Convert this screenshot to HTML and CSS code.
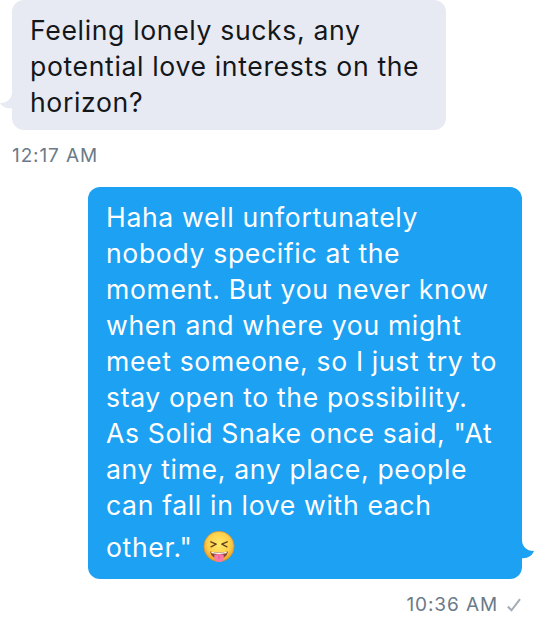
FILE: index.html
```
<!DOCTYPE html>
<html lang="en">
<head>
    <meta charset="UTF-8">
    <meta name="viewport" content="width=device-width, initial-scale=1.0">
    <title>Messages</title>
    <link rel="stylesheet" href="styles.css">
</head>
<body>

    <div class="chat">
        <div class="message received">
            <div class="bubble">
                Feeling lonely sucks, any<br>
                potential love interests on the<br>
                horizon?
                <svg class="tail" width="13" height="20" viewBox="0 0 13 20">
                    <path d="M12 0C12 6 8 11 0 11C2 15 7 17 13 16V0Z"/>
                </svg>
            </div>
            <div class="time">12:17 AM</div>
        </div>

        <div class="message sent">
            <div class="bubble">
                Haha well unfortunately<br>
                nobody specific at the<br>
                moment. But you never know<br>
                when and where you might<br>
                meet someone, so I just try to<br>
                stay open to the possibility.<br>
                As Solid Snake once said, "At<br>
                any time, any place, people<br>
                can fall in love with each<br>
                <span class="last-line">other."
                    <svg class="emoji" width="32" height="32" viewBox="0 0 32 32">
                        <defs>
                            <radialGradient id="face" cx="50%" cy="42%" r="58%">
                                <stop offset="0" stop-color="#ffe96b"/>
                                <stop offset="0.65" stop-color="#fdd04b"/>
                                <stop offset="1" stop-color="#e99a26"/>
                            </radialGradient>
                        </defs>
                        <circle cx="16" cy="15.5" r="15.2" fill="url(#face)" stroke="#b88a45" stroke-width="0.6"/>
                        <path d="M7.8 10.8L13.2 13.2L8 15.8M24.2 10.8L18.8 13.2L24 15.8" fill="none" stroke="#62401d" stroke-width="1.3" stroke-linecap="round" stroke-linejoin="round"/>
                        <path d="M7 20.5Q16 22.5 25 20.5Q23.5 27.5 16 27.5Q8.5 27.5 7 20.5Z" fill="#84492a"/>
                        <path d="M8 20.8Q16 22.6 24 20.8L23.3 22.3Q16 23.8 8.7 22.3Z" fill="#fff"/>
                        <path d="M11.3 23.8Q16 22.3 20.7 23.8V26.5Q20.7 31 16 31Q11.3 31 11.3 26.5Z" fill="#fb79a6"/>
                        <path d="M16 24V28" stroke="#dc5785" stroke-width="0.8"/>
                    </svg>
                </span>
                <svg class="tail" width="13" height="20" viewBox="0 0 13 20">
                    <path d="M1 0C1 6 5 11 13 11C11 16 6 19 0 18V0Z"/>
                </svg>
            </div>
            <div class="time">
                10:36 AM
                <svg class="check" width="14" height="14" viewBox="0 0 14 14">
                    <path d="M0.8 8.5L4.5 12.3L13 1.2"/>
                </svg>
            </div>
        </div>
    </div>

</body>
</html>
```

FILE: styles.css
```
body {
    margin: 0;
    background: #fff;
    font-family: Inter, "Liberation Sans", sans-serif;
}

.chat {
    display: flex;
    flex-direction: column;
    gap: 19px;
    padding: 0 18px 0 12px;
}

.message {
    display: flex;
    flex-direction: column;
}

.received {
    align-items: flex-start;
}

.sent {
    align-items: flex-end;
}

.bubble {
    position: relative;
    box-sizing: border-box;
    width: 434px;
    padding: 12px 18px;
    border-radius: 12px;
    font-size: 26.6px;
    line-height: 36px;
    letter-spacing: 0.64px;
    white-space: nowrap;
}

.received .bubble {
    height: 130px;
    background: #e7eaf2;
    color: #14171a;
}

.sent .bubble {
    height: 392px;
    background: #1da1f2;
    color: #fff;
}

.last-line {
    display: flex;
    align-items: center;
    gap: 10px;
    height: 48px;
}

/* little hooks on the outer edge of each bubble */
.tail {
    position: absolute;
}

.received .tail {
    left: -12px;
    bottom: 18px;
    fill: #e7eaf2;
}

.sent .tail {
    right: -12px;
    bottom: 19px;
    fill: #1da1f2;
}

.time {
    display: flex;
    align-items: center;
    gap: 9px;
    height: 25px;
    margin-top: 13px;
    font-size: 19px;
    line-height: 25px;
    letter-spacing: 0.9px;
    color: #6b7a89;
}

.sent .time {
    padding-right: 1px;
}

.check path {
    fill: none;
    stroke: #a3adb6;
    stroke-width: 2;
}
```
